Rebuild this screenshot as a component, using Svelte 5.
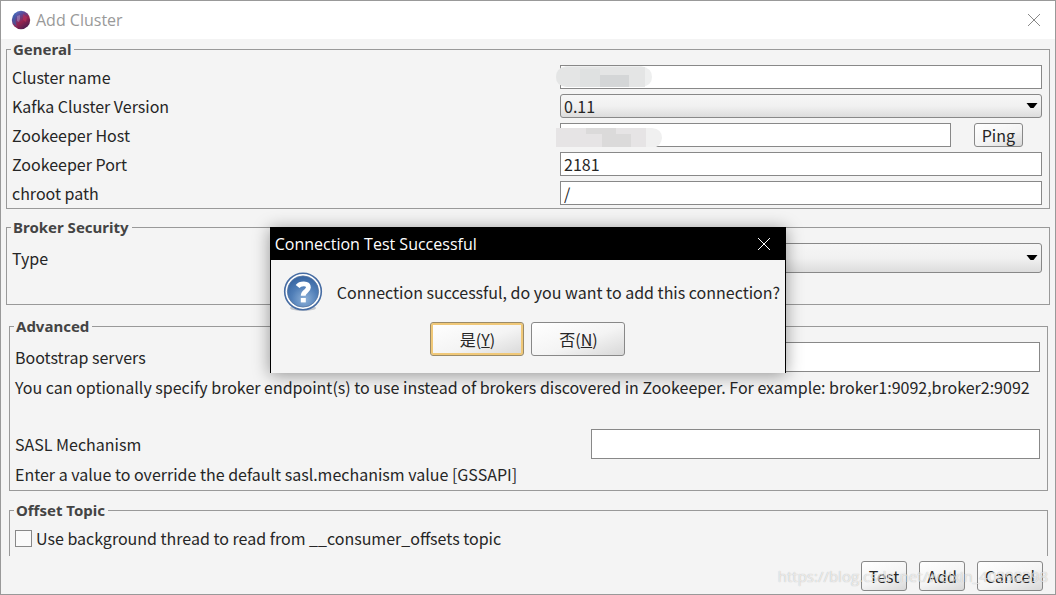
<script lang="ts">
	let clusterName = $state('');
	let version = $state('0.11');
	let host = $state('');
	let port = $state('2181');
	let chroot = $state('/');
	let security = $state('');
	let bootstrap = $state('');
	let sasl = $state('');
	let background = $state(false);
	let asking = $state(true);
</script>

{#snippet arrow()}
	<svg class="arrow" viewBox="0 0 12 6" aria-hidden="true"><path d="M0.5 0H11.5L7.5 5H4.5Z" /></svg>
{/snippet}

{#snippet cross()}
	<svg class="cross" viewBox="0 0 14 14" aria-hidden="true"><path d="M1 1L13 13M13 1L1 13" /></svg>
{/snippet}

<main>
	<header>
		<svg class="logo" viewBox="0 0 20 20" aria-hidden="true">
			<defs>
				<linearGradient id="globe" x1="0" y1="0" x2="0.7" y2="1">
					<stop offset="0" stop-color="#4a94e0" />
					<stop offset="0.35" stop-color="#5a4a9c" />
					<stop offset="0.65" stop-color="#96234f" />
					<stop offset="1" stop-color="#4a1c50" />
				</linearGradient>
			</defs>
			<circle cx="10" cy="10" r="9.2" fill="url(#globe)" />
			<path d="M2 13C1 9 2 5 5 3C4 7 4 11 6 17Z" fill="#3560a8" opacity="0.6" />
			<path d="M6 6L9 5L9 9L8 12L6 11Z" fill="#b79ac6" opacity="0.5" />
			<path d="M12 4L16 7L15 12L12 10Z" fill="#b52d5a" opacity="0.7" />
		</svg>
		<h1>Add Cluster</h1>
		<button class="close" aria-label="Close">{@render cross()}</button>
	</header>

	<form onsubmit={(e) => e.preventDefault()}>
		<fieldset class="outer">
			<legend>General</legend>
			<div class="rows">
				<label for="name">Cluster name</label>
				<div class="field">
					<input id="name" type="text" bind:value={clusterName} />
					<svg class="smudge" width="98" height="22" viewBox="0 0 98 22" aria-hidden="true">
						<path d="M11 0H86Q97 2 97 11T86 21H12Q1 20 1 11T11 0Z" fill="#eeefef" />
						<path d="M11 1H90V21H12Q1 20 1 11T11 1Z" fill="#e4e5e5" />
						<path d="M25 3H45V21H25Z" fill="#dfe1e1" />
						<path d="M45 9H74V21H45Z" fill="#d4d6d7" />
					</svg>
				</div>
				<label for="version">Kafka Cluster Version</label>
				<div class="field">
					<select id="version" bind:value={version}>
						<option>0.11</option>
						<option>0.10</option>
					</select>
					{@render arrow()}
				</div>
				<label for="host">Zookeeper Host</label>
				<div class="field split">
					<input id="host" type="text" bind:value={host} />
					<button class="btn">Ping</button>
					<svg class="smudge low" width="108" height="21" viewBox="0 0 108 21" aria-hidden="true">
						<path d="M1 1H97Q107 2 107 11Q106 18 101 20H1Z" fill="#f0f0f0" />
						<path d="M1 1H91V20H1Z" fill="#e6e4e5" />
						<path d="M31 1H61V7H31ZM47 7H76V20H47Z" fill="#dbdada" />
					</svg>
				</div>
				<label for="port">Zookeeper Port</label>
				<div class="field"><input id="port" type="text" bind:value={port} /></div>
				<label for="chroot">chroot path</label>
				<div class="field"><input id="chroot" type="text" bind:value={chroot} /></div>
			</div>
		</fieldset>

		<fieldset class="outer security">
			<legend>Broker Security</legend>
			<div class="rows tall">
				<label for="type">Type</label>
				<div class="field">
					<select id="type" bind:value={security}>
						<option value=""></option>
					</select>
					{@render arrow()}
				</div>
			</div>
		</fieldset>

		<fieldset class="advanced">
			<legend>Advanced</legend>
			<div class="rows tall">
				<label for="bootstrap">Bootstrap servers</label>
				<div class="field"><input id="bootstrap" type="text" bind:value={bootstrap} /></div>
			</div>
			<p>
				You can optionally specify broker endpoint(s) to use instead of brokers discovered in Zookeeper.
				For example: broker1:9092,broker2:9092
			</p>
			<div class="rows tall sasl">
				<label for="sasl">SASL Mechanism</label>
				<div class="field"><input id="sasl" type="text" bind:value={sasl} /></div>
			</div>
			<p>Enter a value to override the default sasl.mechanism value [GSSAPI]</p>
		</fieldset>

		<fieldset class="offset">
			<legend>Offset Topic</legend>
			<label class="check">
				<input type="checkbox" bind:checked={background} />
				Use background thread to read from __consumer_offsets topic
			</label>
		</fieldset>

		<div class="actions">
			<button class="btn">Test</button>
			<button class="btn">Add</button>
			<button class="btn">Cancel</button>
		</div>
	</form>

	<span class="watermark">https://blog.csdn.net/weixin_40898398</span>

	<dialog open={asking} aria-labelledby="dialog-title">
		<div class="bar">
			<h2 id="dialog-title">Connection Test Successful</h2>
			<button class="close" aria-label="Close" onclick={() => (asking = false)}>{@render cross()}</button>
		</div>
		<div class="message">
			<svg class="question" viewBox="0 0 40 40" aria-hidden="true">
				<defs>
					<radialGradient id="blue" cx="0.55" cy="0.75" r="0.75">
						<stop offset="0" stop-color="#8fb2d9" />
						<stop offset="0.55" stop-color="#517fb8" />
						<stop offset="1" stop-color="#3563a0" />
					</radialGradient>
				</defs>
				<ellipse cx="20" cy="36" rx="13" ry="3" fill="#c4c8ce" />
				<circle cx="20" cy="19.5" r="18.3" fill="#fff" stroke="#466ca3" stroke-width="1.6" />
				<circle cx="20" cy="19.5" r="15.6" fill="url(#blue)" stroke="#54749f" stroke-width="0.8" />
				<path d="M14.6 14.4C17 11.4 25.4 10.4 25.4 15.6C25.4 19.2 20.2 19 20.2 23.8" fill="none" stroke="#fff" stroke-width="4.8" />
				<path d="M17.8 26H22.8V30.4H17.8Z" fill="#fff" />
			</svg>
			<p>Connection successful, do you want to add this connection?</p>
		</div>
		<div class="answers">
			<button class="btn default" onclick={() => (asking = false)}>是(<u>Y</u>)</button>
			<button class="btn" onclick={() => (asking = false)}>否(<u>N</u>)</button>
		</div>
	</dialog>
</main>

<style>
	:global(body) {
		background: #f4f4f4;
	}

	main {
		position: relative;
		box-sizing: border-box;
		min-height: 100vh;
		border: 1px solid #999;
		background: #f4f4f4;
		color: #262626;
		font: 16px/20px 'Noto Sans CJK SC', sans-serif;
	}

	header {
		display: flex;
		align-items: center;
		height: 38px;
		padding: 0 14px 0 10px;
		background: #fff;
	}

	h1,
	h2 {
		flex: 1;
		margin: 0;
		font: 16px/20px 'Open Sans', sans-serif;
	}

	h1 {
		color: #999;
	}

	.logo {
		width: 20px;
		height: 20px;
		margin-right: 5px;
	}

	.close {
		display: flex;
		padding: 0;
		border: 0;
		background: none;
		color: #888;
	}

	.cross {
		width: 14px;
		height: 14px;
		fill: none;
		stroke: currentColor;
	}

	fieldset {
		min-width: 0;
		margin: 0 7px 9px 8px;
		padding: 6px 7px 6px 5px;
		border: 1px solid #999;
	}

	.outer {
		margin: 0 5px 8px;
		padding: 6px 7px 3px 5px;
	}

	.security {
		margin-bottom: 11px;
		padding-bottom: 31px;
	}

	legend {
		margin-left: -1px;
		padding: 0 3px 0 2px;
		color: #444;
		font: 700 15px/20px 'Noto Sans', sans-serif;
	}

	.rows {
		display: grid;
		grid-template-columns: 548fr 482fr;
		grid-auto-rows: 24px;
		gap: 5px 0;
		align-items: center;
	}

	.tall {
		grid-auto-rows: 30px;
	}

	.advanced .rows {
		grid-template-columns: 577fr 449fr;
	}

	.sasl {
		margin-top: 32px;
	}

	.field {
		position: relative;
		display: flex;
		height: 100%;
	}

	.field input,
	select {
		box-sizing: border-box;
		flex: 1;
		min-width: 0;
		padding: 0 3px;
		border: 1px solid #888;
		border-radius: 0;
		background: #fff;
		color: inherit;
		font: inherit;
	}

	select {
		appearance: none;
		border-radius: 3px;
		background: linear-gradient(#f6f6f6, #f1f1f1 50%, #dcdcdc);
	}

	.arrow {
		position: absolute;
		top: 50%;
		right: 4px;
		width: 12px;
		height: 6px;
		margin-top: -3px;
		pointer-events: none;
	}

	.split {
		gap: 23px;
		padding-right: 19px;
	}

	.smudge {
		position: absolute;
		top: 1px;
		left: -5px;
	}

	.low {
		top: 4px;
	}

	p {
		margin: 5px 0;
	}

	.advanced p:last-child {
		margin-bottom: 0;
	}

	.btn {
		box-sizing: border-box;
		padding: 0 7px;
		border: 1px solid #888;
		border-radius: 3px;
		background: linear-gradient(160deg, #fff, #f4f4f4 55%, #d8d8d8);
		color: inherit;
		font: inherit;
	}

	.offset {
		margin-bottom: 5px;
		padding: 8px 5px;
		border-bottom: 0;
	}

	.check {
		display: flex;
		align-items: center;
		gap: 4px;
	}

	.check input {
		appearance: none;
		box-sizing: border-box;
		width: 17px;
		height: 17px;
		margin: 0;
		border: 1px solid #888;
		background: #fafafa;
	}

	.check input:checked {
		background: #466ca3;
	}

	.actions {
		display: flex;
		justify-content: flex-end;
		gap: 12px;
		padding-right: 12px;
	}

	.actions .btn {
		height: 30px;
	}

	.watermark {
		position: absolute;
		right: 7px;
		bottom: 8px;
		color: rgba(255, 255, 255, 0.7);
		font: 15px/20px 'Open Sans', sans-serif;
		text-shadow: 0 0 1px rgba(0, 0, 0, 0.3);
		pointer-events: none;
	}

	dialog {
		position: absolute;
		top: 226px;
		left: 0;
		right: 0;
		box-sizing: border-box;
		width: 49%;
		min-width: min-content;
		margin: 0 auto;
		padding: 0;
		border: 1px solid #000;
		border-bottom: 0;
		background: #f4f4f4;
		color: inherit;
		box-shadow: 0 2px 16px rgba(0, 0, 0, 0.4);
	}

	.bar {
		display: flex;
		align-items: center;
		height: 32px;
		padding: 0 14px 0 4px;
		background: #000;
		color: #fff;
	}

	.bar .close {
		color: #fff;
	}

	.message {
		display: flex;
		align-items: center;
		gap: 14px;
		padding: 12px 4px 0 12px;
	}

	.message p {
		margin: 0;
		white-space: nowrap;
	}

	.question {
		flex: none;
		width: 40px;
		height: 40px;
	}

	.answers {
		display: flex;
		justify-content: center;
		gap: 7px;
		padding: 10px 0 17px;
	}

	.answers .btn {
		width: 94px;
		height: 34px;
	}

	.default {
		border-color: #9a8a68;
		box-shadow: inset 0 0 0 2px #f0c878;
	}
</style>
